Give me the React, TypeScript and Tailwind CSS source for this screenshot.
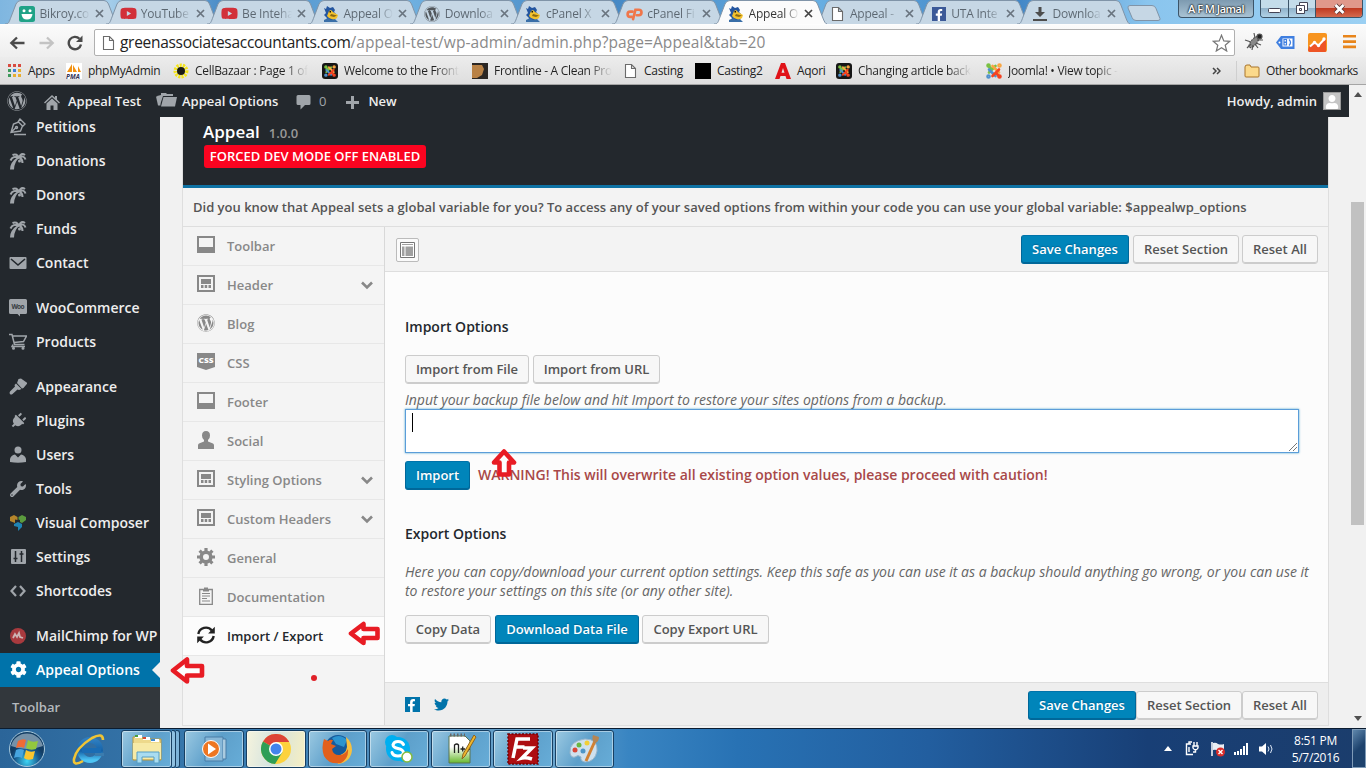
import React from 'react';
import { FaWordpress, FaYoutube, FaCog, FaTwitter, FaWrench, FaPlug, FaUser, FaFacebookF } from 'react-icons/fa';

type P = { className?: string };

const Doc = ({ className }: P) => (
  <svg className={className} viewBox="0 0 16 16" width="16" height="16" fill="#fff" stroke="#6b6b6b" strokeWidth="1.1">
    <path d="M3.5 1.5h6l4 4v9h-10z M9.5 1.5v4h4" />
  </svg>
);

const Gator = () => (
  <svg viewBox="0 0 16 16" width="16" height="16">
    <path d="M1 2l2 1 1-3 3 2 3-1 2 3-1 2 2 2-1 4-3 4H3l1-4-3-3 2-2z" fill="#2456a0" />
    <path d="M6 5l2-1 2 2 5 3-1 3-3 2-5-2-2-2z" fill="#f2c12e" />
    <path d="M8 8l6 1.500-3 1.500-4-1z" fill="#8c6a12" />
    <path d="M6.500 5h1.500v1.500H6.500z" fill="#111" />
    <path d="M1 14l4-2 3 2 4-1 3 3H1z" fill="#3a6fa8" />
  </svg>
);

const CPanel = () => (
  <svg viewBox="0 0 18 14" width="17" height="14" fill="none" stroke="#f0764a" strokeWidth="2.800" strokeLinecap="round">
    <path d="M7 4.500H4.500a2.800 2.800 0 0 0 0 5.600H6" />
    <path d="M7.500 12.500L10 2.500H13.500a2.800 2.800 0 0 1 0 5.800H11.500" />
  </svg>
);

const Joomla = ({ dark }: { dark?: boolean }) => (
  <svg viewBox="0 0 16 16" width="16" height="16">
    {dark && <rect width="16" height="16" rx="3" fill="#161616" />}
    <g transform={dark ? 'translate(2 2) scale(.75)' : undefined} fill="none" strokeWidth="2.600" strokeLinecap="round">
      <path d="M3 9.500L9.500 3M2.500 3L6 6.500" stroke="#7ac143" />
      <path d="M6.500 3L13 9.500" stroke="#f9a541" />
      <path d="M3 6.500L9.500 13" stroke="#5091cd" />
      <path d="M13 6.500L6.500 13M10 10l3.300 3.300" stroke="#f44321" />
      <circle cx="2.500" cy="2.500" r="1" stroke="#7ac143" />
      <circle cx="13.500" cy="2.500" r="1" stroke="#f9a541" />
      <circle cx="2.500" cy="13.500" r="1" stroke="#5091cd" />
      <circle cx="13.500" cy="13.500" r="1" stroke="#f44321" />
    </g>
  </svg>
);

const tabs: { label: string; icon: React.ReactNode; active?: boolean }[] = [
  { label: 'Bikroy.com', icon: (
    <svg viewBox="0 0 16 16" width="16" height="16"><rect width="16" height="16" rx="2.500" fill="#1fa287" /><circle cx="5" cy="4.800" r="1.500" fill="#fff" /><circle cx="11" cy="4.800" r="1.500" fill="#fff" /><path d="M2.500 8h11q-.5 5.500-5.500 5.500T2.500 8z" fill="#fff" /></svg>
  ) },
  { label: 'YouTube', icon: <FaYoutube size={17} color="#d2303a" /> },
  { label: 'Be Inteha', icon: <FaYoutube size={17} color="#d2303a" /> },
  { label: 'Appeal O', icon: <Gator /> },
  { label: 'Downloa', icon: <FaWordpress size={16} color="#51565b" /> },
  { label: 'cPanel X', icon: <Gator /> },
  { label: 'cPanel Fi', icon: <CPanel /> },
  { label: 'Appeal O', icon: <Gator />, active: true },
  { label: 'Appeal -', icon: <Doc /> },
  { label: 'UTA Inte', icon: <span className="flex h-[14px] w-[14px] items-end justify-end bg-[#3b5998] pr-px"><FaFacebookF size={12} color="#fff" /></span> },
  { label: 'Downloa', icon: (
    <svg viewBox="0 0 16 16" width="16" height="16" fill="#4d4d4d"><path d="M6.500 1h3v5H13l-5 5-5-5h3.500zM1 13h14v2H1z" /></svg>
  ) },
];

const Tabs = () => (
  <div className="flex h-6 shrink-0 bg-[linear-gradient(90deg,#7fb6e0_0%,#a4cdea_8%,#4d8ec8_16%,#6fb0e0_30%,#4386c3_44%,#67aee2_60%,#3e83c4_74%,#8ac5ee_84%,#9bd0f3_100%)] pl-[6.500px] text-[12px]">
    {tabs.map((t, i) => (
      <div key={i} className="relative flex h-6 w-[101.3px] shrink-0 items-center pt-[3px]">
        <svg className={t.active ? 'absolute -left-[2px] top-0 z-10' : 'absolute -left-[2px] top-0'} width="113" height="24">
          <path d="M0 24C4 24 4 22 6 17L11 4Q12.500 .5 16 .5H99Q102 .5 103.500 4L108.500 17Q111 24 113 24" fill={t.active ? '#fbfbfb' : '#c6d7e5'} stroke="#8094a8" strokeWidth="1" />
        </svg>
        <span className="relative z-20 ml-3 flex w-[17px] justify-center">{t.icon}</span>
        <span className={t.active
          ? 'relative z-20 ml-[4px] w-[50px] whitespace-nowrap bg-gradient-to-r from-[#333] from-70% to-transparent bg-clip-text text-transparent tracking-[-0.2px]'
          : 'relative z-20 ml-[4px] w-[50px] whitespace-nowrap bg-gradient-to-r from-[#5b6670] from-70% to-transparent bg-clip-text text-transparent tracking-[-0.2px]'}>{t.label}</span>
        <svg className="relative z-20 ml-[5px]" width="9" height="9" stroke={t.active ? '#444' : '#69747f'} strokeWidth="1.700"><path d="M1 1l7 7M8 1l-7 7" /></svg>
      </div>
    ))}
    <svg className="ml-[6px] mt-[5px]" width="34" height="17"><path d="M3 .5h22q3 0 4 3l4 10q.5 2-2 2H9q-3 0-4-3L1 3Q.5 .5 3 .5z" fill="#c6d7e5" stroke="#8094a8" /></svg>
    <div className="ml-auto flex items-start pr-[3px]">
      <div className="mr-[6px] flex h-[18px] w-[76px] items-center justify-center whitespace-nowrap rounded-b-[4px] border border-t-0 border-[#3c5468] bg-[linear-gradient(#7d9ab0,#a9c3d4)] text-[11px] font-semibold leading-[18px] tracking-[-0.5px] text-white [text-shadow:0_0_2px_#000,0_0_2px_#000]">A F M Jamal</div>
      <div className="flex h-[18px] overflow-hidden rounded-b-[4px] border border-t-0 border-[#3c5468]">
        <div className="flex w-[28px] items-center justify-center border-r border-[#3c5468] bg-[linear-gradient(#c4dcea_45%,#91b3cb_50%,#b1d2e6)]"><svg width="13" height="10"><rect x=".5" y="4.500" width="12" height="4" rx="1" fill="#fff" stroke="#445" /></svg></div>
        <div className="flex w-[27px] items-center justify-center border-r border-[#3c5468] bg-[linear-gradient(#c4dcea_45%,#91b3cb_50%,#b1d2e6)]"><svg width="13" height="13" fill="#fff" stroke="#445"><path d="M3.500 .5h8v8h-8z" /><path d="M.5 3.500h8v8h-8zM3.500 6.500h2v2h-2z" /></svg></div>
        <div className="flex w-[46px] items-center justify-center bg-[linear-gradient(#e0988b_45%,#c03a22_50%,#d56a4e)]"><svg width="13" height="12"><path d="M2.500 2l8 8M10.500 2l-8 8" stroke="#533" strokeWidth="4.500" /><path d="M2.500 2l8 8M10.500 2l-8 8" stroke="#fff" strokeWidth="2.800" /></svg></div>
      </div>
    </div>
  </div>
);

const Toolbar = () => (
  <div className="flex h-[33px] shrink-0 items-center border-t border-[#fdfdfd] bg-[linear-gradient(#fbfbfb,#eeeeee)]">
    <svg className="ml-[9px] mt-[3px]" width="16" height="14" fill="none" stroke="#4a4a4a" strokeWidth="2.300"><path d="M15.500 7H2.500M8 1.500L2.300 7 8 12.500" /></svg>
    <svg className="ml-[14px] mt-[3px]" width="16" height="14" fill="none" stroke="#c3c3c3" strokeWidth="2.300"><path d="M.5 7h13M8 1.500L13.700 7 8 12.500" /></svg>
    <svg className="ml-[12px] mt-[3px]" width="16" height="16" fill="none" stroke="#4a4a4a" strokeWidth="2.400"><path d="M14 9.500A6.200 6.200 0 1 1 12.500 3.800" /><path d="M15.500 .5v6.500h-6.500z" fill="#4a4a4a" stroke="none" /></svg>
    <div className="ml-[11px] mt-[3px] flex h-[27px] w-[1141px] items-center rounded-[2px] border border-[#b0b0b0] bg-white">
      <Doc className="ml-[5px]" />
      <span className="ml-[4px] flex-1 whitespace-nowrap pt-px text-[15.500px] tracking-[0.08px] text-[#8a8a8a]"><span className="tracking-[-0.3px] text-[#222]">greenassociatesaccountants.com</span>/appeal-test/wp-admin/admin.php?page=Appeal&amp;tab=20</span>
      <svg className="mr-[3px]" width="19" height="18" fill="#fff" stroke="#777" strokeWidth="1.200"><path d="M9.500 1.200l2.300 5.700 6 .4-4.600 3.900 1.500 5.800-5.200-3.200L4.300 17l1.500-5.800L1.200 7.300l6-.4z" /></svg>
    </div>
    <svg className="ml-[9px] mt-[2px]" width="20" height="20" stroke="#555" strokeWidth="1.200" fill="#888"><ellipse cx="10" cy="10" rx="2.800" ry="7" transform="rotate(40 10 10)" strokeDasharray="2 1" /><path d="M1 8l6 2M3 16l4-4M8 18l1-5M17 13l-5-2M10 1l1 5M19 8l-6 0M14 16l-3-4" fill="none" /><circle cx="15.500" cy="4.500" r="2.500" fill="#222" /></svg>
    <svg className="ml-[12px] mt-[2px]" width="19" height="15"><path d="M0 7.500L5 1h13.500v13H5z" fill="#3f7fe0" /><circle cx="3.500" cy="7.500" r="1" fill="#fff" /><rect x="6.500" y="3.500" width="10" height="8" fill="#fff" /><path d="M8 4.500h2.500v2.500H8zM8 7.500h2.500V10H8zM13 4.500q3 3 0 6" fill="none" stroke="#3f7fe0" strokeWidth="1.200" /></svg>
    <svg className="ml-[13px] mt-[3px]" width="20" height="19"><rect width="19" height="19" rx="2" fill="#f7941f" /><path d="M1 14l5-5 4 3 8-7v13q0 1-1 1H2q-2 0-2-2z" fill="#ee5525" /><path d="M2 13.500l4.500-4 4 3L16.500 6" fill="none" stroke="#fff" strokeWidth="2" /><circle cx="6.500" cy="9.500" r="1.700" fill="#fff" /><circle cx="10.500" cy="12.500" r="1.700" fill="#fff" /><circle cx="16" cy="6" r="1.700" fill="#fff" /></svg>
    <svg className="ml-[15px] mt-[2px]" width="14" height="14" fill="#e8851b"><path d="M0 0h13v2.600H0zM0 5.300h13v2.600H0zM0 10.600h13v2.600H0z" /></svg>
  </div>
);

const Bm = ({ icon, label, w, fade, track }: { icon: React.ReactNode; label: string; w: string; fade?: boolean; track?: string }) => (
  <div className={`flex shrink-0 items-center gap-[6px] ${w}`}>
    <span className="flex w-4 shrink-0 justify-center">{icon}</span>
    <span className={`whitespace-nowrap ${track ?? 'tracking-[-0.3px]'} ${fade ? 'bg-gradient-to-r from-[#222] from-80% to-transparent bg-clip-text text-transparent' : ''}`}>{label}</span>
  </div>
);

const appColors = ['#d84b40', '#d84b40', '#d84b40', '#3f9a5c', '#3f7fd8', '#e8ae30', '#3f9a5c', '#e8ae30', '#e8ae30'];

const BookmarksBar = () => (
  <div className="flex h-[28px] shrink-0 items-center border-b border-[#a5a5a5] bg-[linear-gradient(#ececec,#dedede)] pl-[6px] text-[12px] text-[#222]">
    <Bm w="w-[60px]" label="Apps" icon={<span className="grid grid-cols-3 gap-[2px]">{appColors.map((c, i) => <i key={i} className="size-[3px]" style={{ background: c }} />)}</span>} />
    <Bm w="w-[107px]" label="phpMyAdmin" icon={<svg width="16" height="16"><rect width="16" height="16" fill="#fff" /><path d="M1 9L6 1v8zM7 9V2l4 7zM12 9V3l3 6z" fill="#f29111" /><text x="0" y="15.500" fontSize="6.500" fontWeight="bold" fontStyle="italic" fill="#335" fontFamily="Open Sans, sans-serif">PMA</text></svg>} />
    <Bm w="w-[149px]" label="CellBazaar : Page 1 of" fade icon={<svg width="16" height="16"><circle cx="8" cy="8" r="5.500" fill="none" stroke="#f5e51b" strokeWidth="4" strokeDasharray="2 1" /><circle cx="8" cy="8" r="4" fill="#1b1b14" /></svg>} />
    <Bm w="w-[150px]" label="Welcome to the Front" fade icon={<Joomla dark />} />
    <Bm w="w-[150px]" label="Frontline - A Clean Pro" fade icon={<svg width="16" height="16"><rect width="16" height="16" fill="#2b2724" /><path d="M0 2h10l2 4-2 6-5 3H0z" fill="#b98246" /></svg>} />
    <Bm w="w-[73px]" label="Casting" icon={<Doc />} />
    <Bm w="w-[80px]" label="Casting2" icon={<span className="size-4 bg-black" />} />
    <Bm w="w-[61px]" label="Aqori" icon={<svg width="16" height="16"><path d="M0 16L6 0h4l6 16h-4.500l-1-3h-5l-1 3zM6.500 9.800h3L8 5z" fill="#e01218" /></svg>} />
    <Bm w="w-[150px]" label="Changing article back" fade icon={<Joomla dark />} />
    <Bm w="w-[138px]" label="Joomla! • View topic -" fade icon={<Joomla />} />
    <svg className="ml-auto mr-[15px]" width="9" height="8" fill="none" stroke="#444" strokeWidth="1.500"><path d="M1 1l3 3-3 3M5 1l3 3-3 3" /></svg>
    <div className="mr-[7px] h-5 w-px bg-[#cfcfcf]" />
    <Bm w="w-[122px]" label="Other bookmarks" track="tracking-[-0.45px]" icon={<svg width="16" height="14"><path d="M1 3q0-2 2-2h3l1 2h7q1 0 1 1v8q0 1-1 1H2q-1 0-1-1z" fill="#fbd98b" stroke="#a9742b" /></svg>} />
  </div>
);

const House = () => <svg width="16" height="15" fill="#a0a5aa"><path d="M8 0l3 2.700V1h2v3.500L16 7.500l-1 1L8 2 1 8.500l-1-1z" /><path d="M8 3.500l5.500 5V15H9.500v-4.500h-3V15H2.500V8.500z" /></svg>;

const AdminBar = () => (
  <div className="flex h-8 shrink-0 items-center bg-[#23282d] pt-[2px] text-[13px] font-semibold text-[#eee]">
    <FaWordpress className="ml-[7px] mb-[2px]" size={20} color="#a0a5aa" />
    <span className="ml-[17px]"><House /></span>
    <span className="ml-[8px] w-[74px] whitespace-nowrap">Appeal Test</span>
    <svg className="ml-[14px] mb-[5px]" width="21" height="14" fill="#a0a5aa"><path d="M1 3l4-1V0h5l1 1h6v2H7L4 12z" /><path d="M7.500 4H21l-2 9.500H5z" /><path d="M0 3.500h3.500l1 9H2z" /></svg>
    <span className="ml-[5px] w-[98px] whitespace-nowrap">Appeal Options</span>
    <svg className="ml-[16px]" width="15" height="16" fill="#a0a5aa"><path d="M2 1h11q1.500 0 1.500 1.500v7q0 1.500-1.500 1.500H9l-4.500 4.500V11H2Q.5 11 .5 9.500v-7Q.5 1 2 1z" /></svg>
    <span className="ml-[8px] font-normal text-[#a0a5aa]">0</span>
    <svg className="ml-[20px]" width="13" height="13" fill="#a0a5aa"><path d="M5 0h3v5h5v3H8v5H5V8H0V5h5z" /></svg>
    <span className="ml-[9px]">New</span>
    <span className="ml-auto">Howdy, admin</span>
    <span className="mb-[2px] ml-[6px] mr-[8px] flex size-[18px] items-end justify-center border border-[#999] bg-[#c5c5c5]"><FaUser size={14} color="#fff" /></span>
  </div>
);

const G = '#a0a5aa';
const Palm = () => <svg width="18" height="18" fill="none" stroke={G}><path d="M10.500 6Q5.500 9 5 17.500H1Q1 10 9 5z" fill={G} stroke="none" /><path d="M10 6Q8 1 3.500 3M10 6Q4 3 1.500 8.500M10 6Q12 0 16 3M10 6Q15 2.500 16.500 7.500M10.500 6Q13.500 7 13.500 11" strokeWidth="2" /><circle cx="10.500" cy="9" r="1.500" fill={G} stroke="none" /></svg>;

const menu: { label: string; icon: React.ReactNode; gap?: boolean; active?: boolean }[] = [
  { label: 'Petitions', icon: <svg width="18" height="18" fill="none" stroke={G} strokeWidth="1.400"><path d="M2 14.500L4.500 6l5-2 4 4-2 5zM9 4l2-3 5 5-2.500 2.500M2 14.500l4.500-4.500M5 16.500h12" /><circle cx="7.500" cy="9.500" r="1" /></svg> },
  { label: 'Donations', icon: <Palm /> },
  { label: 'Donors', icon: <Palm /> },
  { label: 'Funds', icon: <Palm /> },
  { label: 'Contact', icon: <svg width="18" height="14"><rect x=".5" y="1" width="17" height="12" rx="1" fill={G} /><path d="M2 3l7 6 7-6" fill="none" stroke="#23282d" strokeWidth="1.600" /></svg> },
  { label: 'WooCommerce', gap: true, icon: <svg width="18" height="18"><path d="M1.500 0h15Q18 0 18 1.500v12Q18 15 16.500 15H11v2.500L8.500 15h-7Q0 15 0 13.500v-12Q0 0 1.500 0z" fill={G} /><text x="2.500" y="10" fontSize="6.500" fontWeight="bold" fill="#353b41" fontFamily="Open Sans, sans-serif" textLength="13">Woo</text></svg> },
  { label: 'Products', icon: <svg width="18" height="17" fill="none" stroke={G} strokeWidth="1.500"><path d="M0 1.500h3l2.500 10h10M3.500 3h14l-3 5.500-9.500 1M4 11.500l-1 2h13" /><circle cx="4.500" cy="15.300" r=".8" /><circle cx="14" cy="15.300" r=".8" /></svg> },
  { label: 'Appearance', gap: true, icon: <svg width="19" height="17" fill={G}><path d="M9.500 1l2.500-.5L18.500 5l-4 5-1.500.5L8 5z" /><path d="M7 5.500l5.500 5.500-2.500 1-1.500-.5-5 4.500q-1.500 1-2.500 0t0-2.500l5-5L5.500 7z" /></svg> },
  { label: 'Plugins', icon: <FaPlug className="rotate-45" size={16} color={G} /> },
  { label: 'Users', icon: <svg width="16" height="17" fill={G}><circle cx="8" cy="4" r="3.500" /><path d="M0 16v-3q1-4 5-4.500l3 3 3-3q4 .5 5 4.500v3q-8 1.500-16 0z" /></svg> },
  { label: 'Tools', icon: <FaWrench size={16} color={G} /> },
  { label: 'Visual Composer', icon: <svg width="16" height="16"><path d="M0 2l4-2 3.500 2v3L5 4.500V8L0 6z" fill="#b5852b" /><path d="M8.500 2L12 0l4 2v3l-4 3-2-1V5L8.500 4.500z" fill="#5b9b3e" /><path d="M4 9l4-2 4 2v3l-4 4V12l-4-1z" fill="#1f84b4" /></svg> },
  { label: 'Settings', icon: <svg width="15" height="15"><rect width="15" height="15" rx="1" fill={G} /><path d="M4.500 2v11M10.500 2v11M2.500 9.500h4M8.500 5h4" stroke="#23282d" strokeWidth="1.500" /></svg> },
  { label: 'Shortcodes', icon: <svg width="16" height="12" fill="none" stroke={G} strokeWidth="2.200"><path d="M6 1L1.500 6 6 11M10 1l4.500 5L10 11" /></svg> },
  { label: 'MailChimp for WP', gap: true, icon: <svg width="16" height="16"><circle cx="8" cy="8" r="8" fill="#a83a3e" /><path d="M3 10l2-4 2 3 2-4 1 4 3 1" fill="none" stroke="#cdb4b4" strokeWidth="1.800" /></svg> },
  { label: 'Appeal Options', active: true, icon: <FaCog size={17} color="#fff" /> },
];

const AdminMenu = () => (
  <nav className="w-[160px] shrink-0 overflow-hidden bg-[#23282d]">
    <div className="-mt-[7px] flex flex-col text-[14px] font-semibold text-[#eee]">
      {menu.map((m) => (
        <div key={m.label} className={`relative flex h-[34px] shrink-0 items-center whitespace-nowrap pb-[2px] pl-[9px] ${m.gap ? 'mt-[11px]' : ''} ${m.active ? 'bg-[#0073aa] text-white' : ''}`}>
          <span className="mr-[9px] flex w-[18px] justify-center pt-px">{m.icon}</span>
          {m.label}
          {m.active && <svg className="absolute right-0 top-[9px]" width="8" height="16"><path d="M8 0v16L0 8z" fill="#f1f1f1" /></svg>}
        </div>
      ))}
      <div className="h-[60px] bg-[#32373c] pl-[12px] pt-[11px] text-[13px] text-[#b4b9be]">Toolbar</div>
    </div>
  </nav>
);

const S = '#888';
const Bottom = () => <svg width="18" height="17"><path d="M0 0h18v17H0zM2 2v9h14V2z" fill={S} fillRule="evenodd" /></svg>;
const Grid = () => <svg width="18" height="17" fill={S}><path d="M0 0h18v17H0zM2 2v13h14V2z" fillRule="evenodd" /><path d="M4 4h10v5H4zM4 10h2.500v3H4zM7.700 10h2.500v3H7.700zM11.500 10H14v3h-2.500z" /></svg>;

const sections: { label: string; icon: React.ReactNode; sub?: boolean; active?: boolean }[] = [
  { label: 'Toolbar', icon: <Bottom /> },
  { label: 'Header', icon: <Grid />, sub: true },
  { label: 'Blog', icon: <FaWordpress size={18} color={S} /> },
  { label: 'CSS', icon: <svg width="18" height="17"><path d="M0 0h18v14l-9 3-9-3z" fill={S} /><text x="1.500" y="10" fontSize="6.500" fontWeight="800" fill="#fff" fontFamily="Open Sans, sans-serif" textLength="15" lengthAdjust="spacingAndGlyphs">CSS</text></svg> },
  { label: 'Footer', icon: <Bottom /> },
  { label: 'Social', icon: <svg width="18" height="18" fill={S}><path d="M9 0q4 0 4 4.500Q13 8 11 9v1.500l5 2q1 .5 1 2V18H1v-3.500q0-1.500 1-2l5-2V9Q5 8 5 4.500 5 0 9 0z" /></svg> },
  { label: 'Styling Options', icon: <Grid />, sub: true },
  { label: 'Custom Headers', icon: <Grid />, sub: true },
  { label: 'General', icon: <svg width="18" height="18" viewBox="0 0 18 18" fill="none" stroke={S}><circle cx="9" cy="9" r="4.800" strokeWidth="3.600" /><path d="M9 0v3M9 15v3M0 9h3M15 9h3M2.600 2.600l2.200 2.200M13.200 13.200l2.200 2.200M2.600 15.400l2.200-2.200M13.200 4.800l2.200-2.200" strokeWidth="3.200" /></svg> },
  { label: 'Documentation', icon: <svg width="14" height="18" fill="none" stroke={S}><path d="M.7 2.500h12.600v15H.7z" strokeWidth="1.300" /><path d="M4 3.500h6M5 1.500h4" strokeWidth="2" /><path d="M3 6.500h8M3 9h8M3 11.500h5M3 14h8" /></svg> },
  { label: 'Import / Export', icon: <svg width="18" height="18" fill="none" stroke="#222" strokeWidth="2.400"><path d="M1.300 8A7.700 7.700 0 0 1 14.800 4.500M16.700 10A7.700 7.700 0 0 1 3.200 13.500" /><path d="M17.800 .8v6.700h-6.700zM.2 17.200v-6.700h6.700z" fill="#222" stroke="none" /></svg>, active: true },
];

const Btn = ({ children, w, primary, gap }: { children: string; w: string; primary?: boolean; gap?: string }) => (
  <button className={`flex h-[29px] shrink-0 items-center justify-center whitespace-nowrap rounded-[3px] border text-[13px] font-semibold ${w} ${gap ?? ''} ${primary ? 'border-[#006799] border-t-[#0073aa] bg-[#0085ba] text-white shadow-[inset_0_-1px_0_#006799] [text-shadow:0_-1px_1px_#006799]' : 'border-[#ccc] bg-[#f7f7f7] text-[#555] shadow-[inset_0_-1px_0_#ccc]'}`}>{children}</button>
);

const Panel = () => (
  <div className="ml-[22px] flex h-[609px] w-[1147px] shrink-0 flex-col border-x border-b border-[#dedede]">
    <header className="h-[71px] shrink-0 border-b-[3px] border-[#0e72a4] bg-[#23282d] pl-[20px]">
      <div className="flex h-[28px] items-center pt-[2px] text-[17px] font-semibold text-white">Appeal<span className="ml-[9px] pt-[3px] text-[13px] text-[#999]">1.0.0</span></div>
      <div className="ml-px flex h-[23px] w-[222px] items-center justify-center whitespace-nowrap rounded-[3px] bg-[#fb0420] pt-px text-[13px] font-semibold text-white">FORCED DEV MODE OFF ENABLED</div>
    </header>
    <div className="flex h-[39px] shrink-0 items-center whitespace-nowrap border-b border-[#dedede] bg-[#f3f3f3] pl-[10px] pt-[2px] text-[13px] font-semibold text-[#555]">Did you know that Appeal sets a global variable for you? To access any of your saved options from within your code you can use your global variable: $appealwp_options</div>
    <div className="flex min-h-0 flex-1">
      <aside className="w-[202px] shrink-0 border-r border-[#d8d8d8] bg-[#f4f4f4] text-[13px] font-semibold text-[#888]">
        {sections.map((s) => (
          <div key={s.label} className={`flex h-[39px] items-center border-b border-[#e7e7e7] pl-[14px] pt-[2px] ${s.active ? 'bg-[#fcfcfc] text-[#23282d]' : ''}`}>
            <span className="mb-[5px] mr-[12px] flex w-[18px] justify-center">{s.icon}</span>
            {s.label}
            {s.sub && <svg className="mb-px ml-auto mr-[11px]" width="12" height="9" fill="none" stroke={S} strokeWidth="2.600"><path d="M1 1.500l5 5 5-5" /></svg>}
          </div>
        ))}
      </aside>
      <main className="flex min-w-0 flex-1 flex-col bg-[#fcfcfc]">
        <div className="flex h-[45px] shrink-0 items-center border-b border-[#dedede] bg-[#f3f3f3] pl-[11px] pr-[10px] pt-px">
          <span className="mr-auto flex h-6 w-[23px] items-center justify-center rounded-[2px] border border-[#bbb] bg-[#fafafa]"><svg width="15" height="16"><path d="M.5 .5h14v15H.5z" fill="#fff" stroke="#777" /><path d="M2 2h11v1H2zM2 4.500h2.500V14H2zM5.500 4.500H13V14H5.500z" fill="#a0a0a0" /></svg></span>
          <Btn w="w-[108px]" primary>Save Changes</Btn>
          <Btn w="w-[106px]" gap="ml-[4px]">Reset Section</Btn>
          <Btn w="w-[76px]" gap="ml-[3px]">Reset All</Btn>
        </div>
        <div className="flex-1 pl-[20px] pr-[20px] pt-[45px]">
          <h3 className="h-[20px] text-[14px] font-semibold leading-5 text-[#23282d]">Import Options</h3>
          <div className="mt-[18px] flex gap-[4px]"><Btn w="w-[124px]">Import from File</Btn><Btn w="w-[127px]">Import from URL</Btn></div>
          <p className="mt-[6px] text-[14px] italic leading-[19px] text-[#666]">Input your backup file below and hit Import to restore your sites options from a backup.</p>
          <div className="relative h-[44px] w-[894px] border border-[#5b9dd9] bg-white pl-[6px] pt-[3px] shadow-[0_0_2px_rgba(30,140,190,.8)]">
            <div className="h-[19px] w-px bg-black" />
            <svg className="absolute bottom-[1px] right-[1px]" width="8" height="8" stroke="#777"><path d="M0 8l8-8M4 8l4-4" /></svg>
          </div>
          <div className="mt-[8px] flex items-center"><Btn w="w-[65px]" primary>Import</Btn><span className="ml-[8px] whitespace-nowrap pb-[2px] text-[14px] font-semibold tracking-[-0.01px] text-[#a84848]">WARNING! This will overwrite all existing option values, please proceed with caution!</span></div>
          <h3 className="mt-[34px] h-[20px] text-[14px] font-semibold leading-5 text-[#23282d]">Export Options</h3>
          <p className="mt-[18px] whitespace-nowrap text-[14px] italic leading-[19px] text-[#666]">Here you can copy/download your current option settings. Keep this safe as you can use it as a backup should anything go wrong, or you can use it<br />to restore your settings on this site (or any other site).</p>
          <div className="mt-[15px] flex gap-[4px]"><Btn w="w-[86px]">Copy Data</Btn><Btn w="w-[144px]" primary>Download Data File</Btn><Btn w="w-[127px]" gap="-ml-px">Copy Export URL</Btn></div>
        </div>
        <div className="flex h-[43px] shrink-0 items-center border-t border-[#dedede] bg-[#eee] pl-[20px] pr-[10px] pt-[3px]">
          <span className="mb-[3px] flex size-[15px] items-end justify-end bg-[#0073aa] pr-[2px]"><FaFacebookF size={13} color="#fff" /></span>
          <FaTwitter className="mb-[3px] ml-[14px] mr-auto" size={15} color="#0073aa" />
          <Btn w="w-[108px]" primary>Save Changes</Btn>
          <Btn w="w-[106px]">Reset Section</Btn>
          <Btn w="w-[76px]">Reset All</Btn>
        </div>
      </main>
    </div>
  </div>
);

const RedArrow = ({ pos, kind }: { pos: string; kind: 'big' | 'small' | 'up' }) => {
  const box = { big: [35, 29], small: [32, 25], up: [28, 30] }[kind];
  const path = {
    big: 'M3 14.500L17 3.500v6.500h15v9.500H17v6z',
    small: 'M3 12.500L15.500 3v5h14v9h-14v5z',
    up: 'M14 3.500L24 14.500h-5V26.500H9.500V14.500H4z',
  }[kind];
  return (
    <svg className={`absolute z-30 ${pos}`} width={box[0]} height={box[1]} fill="#fdfdfd" stroke="#e81c24" strokeWidth="4.600" strokeLinejoin="round"><path d={path} /></svg>
  );
};

const apps: { w: string; lit?: boolean; stack?: boolean; icon: React.ReactNode }[] = [
  { w: 'w-[51px]', stack: true, icon: <svg width="32" height="30"><path d="M2 3h9l1 2h18v21H2z" fill="#edd98b" stroke="#b8983e" /><path d="M4 1h7v3H4zM12 3h7v3h-7zM20 5h8v3h-8z" fill="#fff" /><path d="M4 1h3v2H4z" fill="#4aa03e" /><path d="M12 3h3v2h-3z" fill="#d84a34" /><path d="M20 5h4v2h-4z" fill="#3e8ad0" /><path d="M2 9h28v16H2z" fill="#f7eaa6" /><path d="M6 18h22v11h-5v-6H11v6H6z" fill="#a9dcf0" stroke="#579ec4" /></svg> },
  { w: 'w-[60px]', icon: <svg width="30" height="28"><path d="M6 2h18v24H6z" fill="#88b8d8" stroke="#497da7" /><path d="M24 4h3v20h-3" fill="#aacbe0" stroke="#497da7" /><circle cx="12" cy="14" r="8.500" fill="#ee7622" stroke="#fff" /><path d="M9 8.500L17 14l-8 5.500z" fill="#fff" /></svg> },
  { w: 'w-[60px]', lit: true, icon: <svg width="30" height="30" viewBox="0 0 30 30"><circle cx="15" cy="15" r="15" fill="#fdd23c" /><path d="M15 15L2 7.500A15 15 0 0 1 28 7.500L28 8H15z" fill="#dc4437" /><path d="M15 15L2 7.500A15 15 0 0 0 14 30L21.500 18z" fill="#2e9e56" /><circle cx="15" cy="15" r="7" fill="#fff" /><circle cx="15" cy="15" r="5.500" fill="#4384ed" /></svg> },
  { w: 'w-[59px]', icon: <svg width="31" height="30" viewBox="0 0 31 30"><circle cx="16" cy="14" r="13" fill="#155a9c" /><path d="M10 4q8-5 15 2l-3 7-8-3z" fill="#2b94d0" /><path d="M24 3q6 5 6 13-1 12-14 14L14 22q10-1 11-9z" fill="#f7c040" /><path d="M2 5l4 2q2-2 5-1l-2 4 5 2-4 3q1 6 7 6 6 0 9-6 1 9-7 14-12 2-17-7-3-8 0-17z" fill="#e2601c" /></svg> },
  { w: 'w-[60px]', icon: <svg width="30" height="30"><circle cx="14" cy="15" r="12" fill="#00aff0" /><circle cx="8" cy="8" r="7" fill="#00aff0" /><circle cx="20" cy="21" r="7" fill="#00aff0" /><path d="M19.500 10.500Q18 7.500 14 7.500t-5 3.300q0 2.700 5 3.700t5.500 4q-.5 3.500-5.500 3.500t-6-3.500" fill="none" stroke="#fff" strokeWidth="3" strokeLinecap="round" /><circle cx="23" cy="23" r="5" fill="#fff" stroke="#84bb3f" strokeWidth="1.500" /></svg> },
  { w: 'w-[60px]', icon: <svg width="31" height="31"><defs><linearGradient id="np" x2="0" y2="1"><stop offset=".4" stopColor="#fff" /><stop offset="1" stopColor="#68b92d" /></linearGradient></defs><path d="M3 3h16l5 5v22H3z" fill="url(#np)" stroke="#5b7450" /><path d="M4 2h15" stroke="#666" strokeWidth="3" strokeDasharray="1.500 2" /><path d="M8.500 20v-8q2.500-2 4 0v8M14.500 16h4.500M16.700 13.500v5M20 16h4M22 13.500v5" fill="none" stroke="#222" strokeWidth="1.300" /><path d="M28 2l2 2-11 19-3 3 1-5z" fill="#f0b72c" stroke="#8d6420" /></svg> },
  { w: 'w-[60px]', icon: <svg width="32" height="32"><rect x="1" y="1" width="30" height="30" fill="#ad0d11" stroke="#6e0508" strokeWidth="1.500" strokeDasharray="2 1.500" /><path d="M6 25L10 6h13M8.500 14h9M16 15h9L15 25q4-1 10 1" fill="none" stroke="#fff" strokeWidth="3.500" /></svg> },
  { w: 'w-[59px]', icon: <svg width="32" height="31"><path d="M1 20Q0 8 16 6q13 0 12 12-2 11-12 11-5-1-4-5-3-3-6 0-4 1-5-4z" fill="#cfe1ee" stroke="#9cb7cb" /><circle cx="6" cy="17" r="2.500" fill="#d94838" /><circle cx="10" cy="12" r="2.500" fill="#6ab744" /><circle cx="18" cy="10" r="2.500" fill="#f1cf38" /><circle cx="14" cy="18" r="2.500" fill="#4e96c8" /><path d="M26 8L17 28" stroke="#d28133" strokeWidth="3" /><path d="M24 2l6 2q0 5-4 6-4-3-2-8z" fill="#b58553" /></svg> },
];

const Taskbar = () => (
  <footer className="flex h-10 shrink-0 items-center border-t border-[#0b1c30] bg-[linear-gradient(90deg,#2b6599_0%,#3c7fb4_20%,#6ca6ce_40%,#3985c2_46%,#2872b4_54%,#225e9f_68%,#183f76_84%,#1b3d6c_100%)]">
    <svg className="ml-[8px]" width="38" height="38"><defs><radialGradient id="orb" cy=".85"><stop stopColor="#3ed5f5" /><stop offset=".7" stopColor="#17588d" /><stop offset="1" stopColor="#123d64" /></radialGradient></defs><circle cx="19" cy="19" r="17.500" fill="url(#orb)" stroke="#a6c8dc" /><path d="M3 16A16.500 16.500 0 0 1 35 16q-16 6-32 0z" fill="#b7c9d5" opacity=".6" /><path d="M10 11q5-3 8-1l-2 8q-3-2-8 0z" fill="#ef6b35" /><path d="M20 10q4 3 10 1l-2 8q-6 2-10-1z" fill="#93c83f" /><path d="M8 20q4-2 8 0l-2 8q-4-2-8 0z" fill="#47a5df" /><path d="M18 20q4 3 9 1l-2 8q-6 2-9-1z" fill="#fbc52e" /></svg>
    <svg className="ml-[26px]" width="34" height="32"><defs><linearGradient id="ie" x2="0" y2="1"><stop stopColor="#2e7ec0" /><stop offset=".55" stopColor="#1562a8" /><stop offset="1" stopColor="#4cc4f4" /></linearGradient></defs><circle cx="18" cy="17" r="10" fill="none" stroke="url(#ie)" strokeWidth="6" /><path d="M10 15h19v5H10z" fill="#1a6cb4" /><path d="M23 20h9v3h-9z" fill="#3b7cae" /><path d="M31 7Q31-1 20 5 4 15 2 26q-1 8 9 2" fill="none" stroke="#f0c435" strokeWidth="2.600" /></svg>
    <div className="ml-[15px] flex items-center gap-[2px]">
      {apps.map((a, i) => (
        <React.Fragment key={i}>
          <div className={`flex h-[38px] shrink-0 items-center justify-center rounded-[3px] border border-[#173f62] shadow-[inset_0_0_0_1px_rgba(255,255,255,.45)] ${a.w} ${a.lit ? 'bg-[linear-gradient(100deg,#f6f4dd,#d4e3df_45%,#f7efc2)]' : 'bg-[linear-gradient(120deg,#9bc9e2,#5d9fca_50%,#67add8)]'}`}>{a.icon}</div>
          {a.stack && <div className="-ml-[2px] mr-[2px] flex"><div className="h-[38px] w-[4px] rounded-r-[3px] border-y border-r border-[#173f62] bg-[#8fc0e0]" /><div className="h-[38px] w-[4px] rounded-r-[3px] border-y border-r border-[#173f62] bg-[#7db3d8]" /></div>}
        </React.Fragment>
      ))}
    </div>
    <div className="ml-auto flex items-center text-white">
      <svg width="8" height="5" fill="#fff"><path d="M4 0l4 5H0z" /></svg>
      <svg className="ml-[13px]" width="14" height="15" fill="none" stroke="#fff" strokeWidth="1.400"><path d="M6 3H1.500v10.500H8M4 3V1h3M9 1v4M12 1v4M8 5h5v2q-2.500 4-5 0zM10.500 8v3H8M4 6v5" /></svg>
      <svg className="ml-[11px]" width="16" height="16"><path d="M2 1v14" stroke="#fff" strokeWidth="1.500" /><path d="M3 2q3-1 5 1 3 1 6 0v7q-4 1-6 0-2-2-5-1z" fill="#e9eef4" /><circle cx="10.500" cy="11" r="4.500" fill="#db2c29" /><path d="M8.500 9l4 4M12.500 9l-4 4" stroke="#fff" strokeWidth="1.400" /></svg>
      <svg className="ml-[8px]" width="15" height="12" fill="#fff"><path d="M0 9h2v3H0zM3 8h2v4H3zM6 6h2v6H6zM9 3h2v9H9zM12 0h2v12h-2z" /></svg>
      <svg className="ml-[9px]" width="16" height="14"><path d="M1 4.500h3L8 1v12L4 9.500H1z" fill="#fff" /><path d="M10 4.500q2 2.500 0 5M12.500 3q3 4 0 8" fill="none" stroke="#dce7f5" /></svg>
      <div className="ml-[15px] mr-[5px] w-[53px] whitespace-nowrap text-center text-[12px] leading-[17px] tracking-[-0.3px]">8:51 PM<br />5/7/2016</div>
    </div>
    <div className="ml-[5px] h-[39px] w-[14px] border border-[#7f9bb7] bg-[linear-gradient(135deg,#5f87ac,#1d426d_50%)]" />
  </footer>
);

export default function App() {
  return (
    <div className="relative flex h-[768px] w-[1366px] flex-col overflow-hidden bg-[#f1f1f1] font-['Open_Sans',sans-serif]">
      <Tabs />
      <Toolbar />
      <BookmarksBar />
      <div className="flex h-[643px] shrink-0">
        <div className="flex w-[1349px] flex-col">
          <AdminBar />
          <div className="flex min-h-0 flex-1"><AdminMenu /><Panel /></div>
        </div>
        <div className="flex w-[17px] flex-col items-center bg-[#f1f1f1] pt-[7px]">
          <svg width="8" height="5" fill="#505050"><path d="M4 0l4 5H0z" /></svg>
          <div className="mt-[105px] h-[323px] w-[13px] bg-[#c1c1c1]" />
          <svg className="mb-[7px] mt-auto" width="8" height="5" fill="#505050"><path d="M0 0h8L4 5z" /></svg>
        </div>
      </div>
      <Taskbar />
      <RedArrow pos="left-[170px] top-[656px]" kind="big" />
      <RedArrow pos="left-[348px] top-[621px]" kind="small" />
      <RedArrow pos="left-[490px] top-[448px]" kind="up" />
      <div className="absolute left-[311px] top-[675px] size-[6px] rounded-full bg-[#e02028]" />
    </div>
  );
}
